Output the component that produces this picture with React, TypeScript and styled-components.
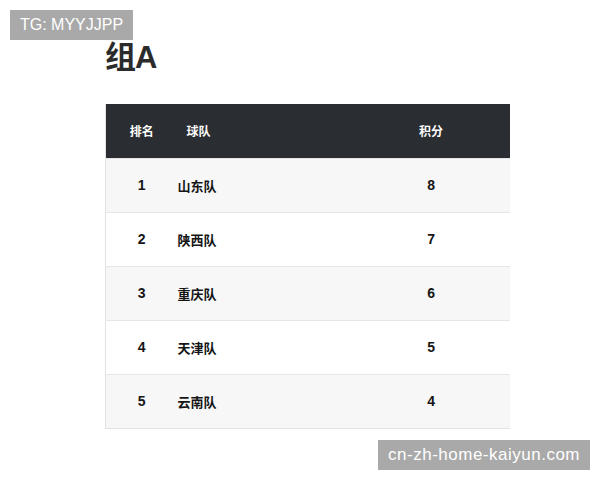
import styled, { createGlobalStyle } from 'styled-components';

const GlobalStyle = createGlobalStyle`
  body {
    margin: 0;
    background: #ffffff;
    font-family: "Liberation Sans", "Noto Sans CJK SC", sans-serif;
  }
`;

interface Team {
  rank: number;
  name: string;
  points: number;
}

const teams: Team[] = [
  { rank: 1, name: '山东队', points: 8 },
  { rank: 2, name: '陕西队', points: 7 },
  { rank: 3, name: '重庆队', points: 6 },
  { rank: 4, name: '天津队', points: 5 },
  { rank: 5, name: '云南队', points: 4 },
];

const Page = styled.div`
  position: relative;
  width: 600px;
  height: 480px;
  padding: 34px 0 0 105px;
  box-sizing: border-box;
`;

const Title = styled.h2`
  margin: 0 0 22px;
  font-size: 31px;
  line-height: 48px;
  font-weight: 700;
  color: #2b2b2b;
  letter-spacing: -1px;
`;

const Table = styled.table`
  width: 405px;
  border-collapse: collapse;
  border-left: 1px solid #e2e2e2;
  border-bottom: 1px solid #e2e2e2;
`;

const HeadRow = styled.tr`
  background: #2a2d31;
  height: 54px;
`;

const Th = styled.th<{ align?: 'left' | 'center'; pad?: number }>`
  color: #ffffff;
  font-size: 12px;
  font-weight: 700;
  text-align: ${(p) => p.align ?? 'center'};
  padding: 0 0 0 ${(p) => p.pad ?? 0}px;
`;

const Row = styled.tr<{ striped: boolean }>`
  height: 54px;
  background: ${(p) => (p.striped ? '#f7f7f7' : '#ffffff')};
  border-top: 1px solid #e6e6e6;
`;

const Td = styled.td<{ numeric?: boolean }>`
  color: #151515;
  font-size: ${(p) => (p.numeric ? 14 : 13)}px;
  font-weight: 700;
  text-align: ${(p) => (p.numeric ? 'center' : 'left')};
  padding: 0;
`;

const Tag = styled.div<{ corner: 'top' | 'bottom' }>`
  position: absolute;
  ${(p) =>
    p.corner === 'top'
      ? 'left: 10px; top: 10px; font-size: 16px;'
      : 'right: 10px; top: 440px; font-size: 17px; letter-spacing: 0.5px;'}
  height: 30px;
  padding: 0 10px;
  display: flex;
  align-items: center;
  background: #a9a9a9;
  color: #ffffff;
  font-family: "Liberation Sans", Arial, sans-serif;
`;

export default function App() {
  return (
    <>
      <GlobalStyle />
      <Page>
        <Title>组A</Title>
        <Table>
          <colgroup>
            <col style={{ width: 72 }} />
            <col style={{ width: 175 }} />
            <col style={{ width: 158 }} />
          </colgroup>
          <thead>
            <HeadRow>
              <Th>排名</Th>
              <Th align="left" pad={9}>球队</Th>
              <Th>积分</Th>
            </HeadRow>
          </thead>
          <tbody>
            {teams.map((t, i) => (
              <Row key={t.rank} striped={i % 2 === 0}>
                <Td numeric>{t.rank}</Td>
                <Td>{t.name}</Td>
                <Td numeric>{t.points}</Td>
              </Row>
            ))}
          </tbody>
        </Table>
        <Tag corner="top">TG: MYYJJPP</Tag>
        <Tag corner="bottom">cn-zh-home-kaiyun.com</Tag>
      </Page>
    </>
  );
}
